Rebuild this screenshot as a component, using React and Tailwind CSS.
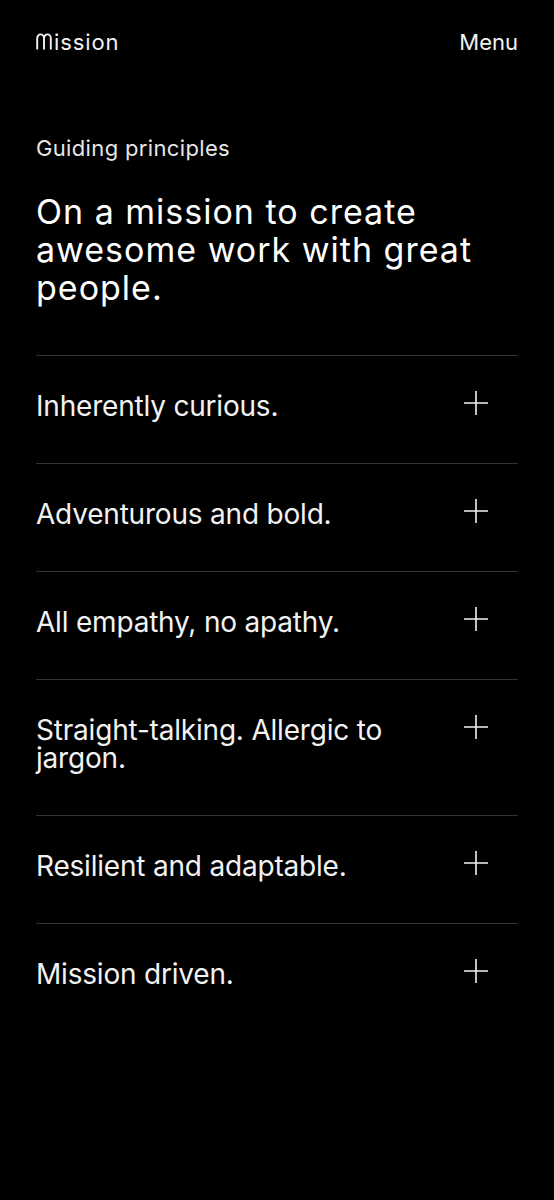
import React from "react";

const items = [
  "Inherently curious.",
  "Adventurous and bold.",
  "All empathy, no apathy.",
  "Straight-talking. Allergic to jargon.",
  "Resilient and adaptable.",
  "Mission driven.",
];

function PlusIcon() {
  return (
    <svg width="24" height="24" viewBox="0 0 24 24" className="shrink-0 mr-[30px] -mt-px" fill="none">
      <path d="M0 12H24M12 0V24" stroke="#f2f2f2" strokeWidth="1.6" />
    </svg>
  );
}

function LogoM() {
  return (
    <svg width="16" height="17" viewBox="0 0 16 17" className="inline-block mr-[2px]" fill="none">
      <path
        d="M1.2 16.5V5.4C1.2 3.1 2.7 1.4 4.6 1.4C6.5 1.4 8 3.1 8 5.4V16.5M8 5.4C8 3.1 9.5 1.4 11.4 1.4C13.3 1.4 14.8 3.1 14.8 5.4V16.5"
        stroke="#f2f2f2"
        strokeWidth="1.9"
      />
    </svg>
  );
}

export default function App() {
  return (
    <div
      className="min-h-[1200px] w-full bg-black text-[#f2f2f2] px-9 pb-24"
      style={{ fontFamily: "Inter, 'Noto Sans', sans-serif" }}
    >
      <header className="flex justify-between items-center pt-[27px] text-[22px] leading-[28px]">
        <div className="flex items-baseline">
          <span className="flex items-end h-[28px] pb-[5px]">
            <LogoM />
          </span>
          <span className="tracking-[0.9px]">ission</span>
        </div>
        <div>Menu</div>
      </header>

      <p className="mt-[78px] text-[22px] leading-[28px] tracking-[0.35px] text-[#e6e6e6]">Guiding principles</p>

      <h1 className="mt-[31px] text-[34px] leading-[38px] tracking-[1px] text-white">
        On a mission to create awesome work with great people.
      </h1>

      <ul className="mt-[48px]">
        {items.map((t) => (
          <li key={t} className="border-t border-[#333333] flex justify-between items-start pt-9 pb-[43px]">
            <span className="text-[28px] leading-[28px] tracking-[-0.2px] max-w-[380px]">{t}</span>
            <PlusIcon />
          </li>
        ))}
      </ul>
    </div>
  );
}
